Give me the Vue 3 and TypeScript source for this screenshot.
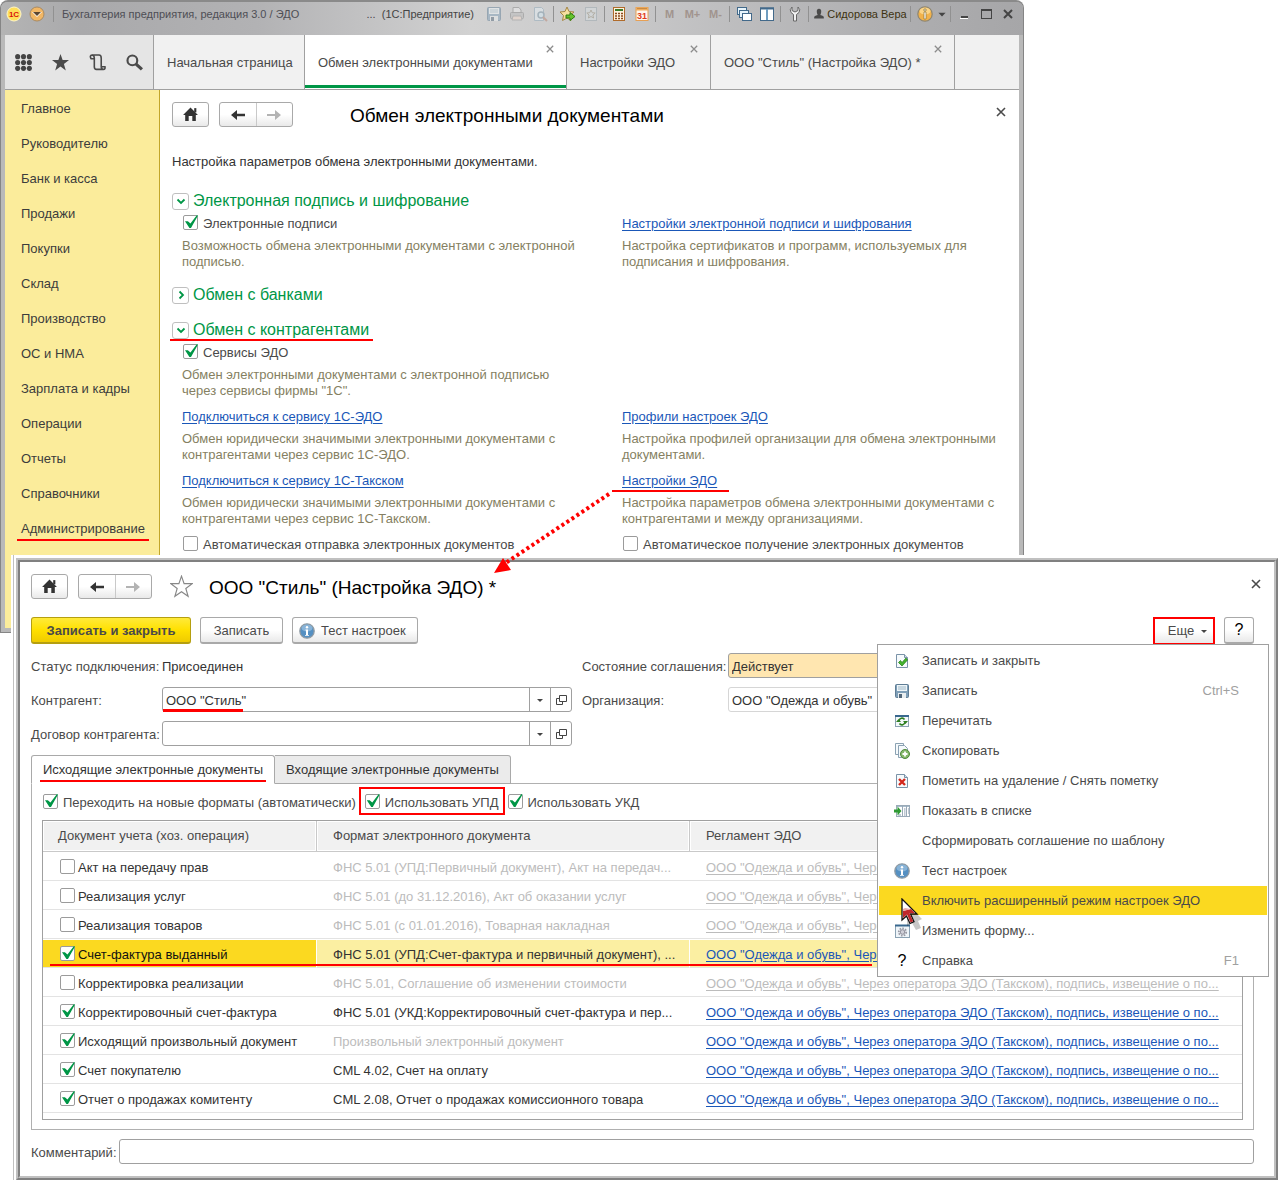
<script setup lang="ts">
import { ref } from 'vue'

interface ToolItem { kind: 'icon' | 'sep' | 'text'; name?: string; label?: string }
interface MenuItem { text: string; icon?: string; key?: string; active?: boolean }
interface DocRow { on: boolean; name: string; format: string; dimFormat: boolean; dimLink: boolean; current?: boolean }

const page = '<path d="M2.500 1.500h8l3 3v10h-11z" fill="#f6fafc" stroke="#7a93a8"/><path d="M10.500 1.500v3h3" fill="#cfdde8" stroke="#7a93a8"/>'

const icons: Record<string, string> = {
  save: '<rect x="1.500" y="1.500" width="13" height="13" rx="1" fill="#7f9fb8" stroke="#5f7d95"/><rect x="3" y="2" width="10" height="6" fill="#eef5f8"/><path d="M4 4h8M4 6h8" stroke="#9fb8c8"/><rect x="4" y="10" width="8" height="5" fill="#e9eef0"/><rect x="5" y="11" width="3" height="4" fill="#52677a"/>',
  print: '<path d="M4 6V1.500h6L12 4v2" fill="#eee" stroke="#888"/><rect x="1.500" y="6.500" width="13" height="6" rx="1" fill="#bbb" stroke="#888"/><path d="M4 10h8l1 4H3z" fill="#f2d9cc" stroke="#999"/>',
  preview: '<path d="M2.500 1.500h7l2 2v11h-9z" fill="#e5eff5" stroke="#8fa9ba"/><circle cx="9" cy="9" r="3" fill="#d5ecf7" stroke="#7c97a8" stroke-width="1.500"/><path d="M11 11l4 4" stroke="#b98572" stroke-width="2"/>',
  favadd: '<path d="M7 1l2 4.500 5 .5-4 3.500 1 5L7 12l-4.500 2.500 1-5L0 6l5-.5z" fill="#f7dfa0" stroke="#a58645"/><path d="M6 9h4V6.500l5 4-5 4V12H6z" fill="#66c32c" stroke="#2f7d10"/>',
  favdoc: '<rect x="2.500" y="1.500" width="11" height="13" fill="#d8dfe2" stroke="#9aa7ae"/><path d="M8 4l1.200 2.700 3 .3-2.300 2 .7 3L8 10.500 5.400 12l.7-3-2.300-2 3-.3z" fill="none" stroke="#9c9480"/>',
  calc: '<rect x="2.500" y="1.500" width="11" height="13" fill="#fff3df" stroke="#b06c2c"/><path d="M4 4h8" stroke="#3c7a2a" stroke-width="2"/><path d="M4 7.500h8M4 10h8M4 12.500h8" stroke="#8b4a1c" stroke-width="1.500" stroke-dasharray="2 1"/>',
  date: '<rect x="2" y="1.500" width="12" height="13" fill="#fff7ee" stroke="#e6a055"/><path d="M2 3h12" stroke="#efac5e" stroke-width="3"/><path d="M3.500 2.500h9" stroke="#a06a2c" stroke-dasharray="1 1"/><text x="8" y="13" font-family="Liberation Sans" font-size="9" font-weight="700" text-anchor="middle" fill="#e03a1c">31</text>',
  windows: '<rect x="1.500" y="1.500" width="9" height="7" fill="#e8f4fb" stroke="#42698a"/><rect x="3.500" y="4.500" width="9" height="7" fill="#e8f4fb" stroke="#42698a"/><rect x="6.500" y="7.500" width="9" height="7" fill="#fff" stroke="#42698a"/>',
  split: '<rect x="1.500" y="2" width="13" height="12.500" fill="#fff" stroke="#42698a"/><path d="M1 2.500h14" stroke="#42698a" stroke-width="2"/><path d="M8 3v11" stroke="#6f9dc0" stroke-width="2"/>',
  wrench: '<path d="M5 1v3.500L8 6l3-1.500V1q3 2.500 1 5.500L9.500 8.500V15h-3V8.500L4 6.500Q2 3.500 5 1z" fill="#f0f0f0" stroke="#666"/>',
  info: '<circle cx="8" cy="8" r="7.200" fill="#5590c2" stroke="#8f9aa3" stroke-width="1.300"/><ellipse cx="8" cy="5" rx="5.500" ry="3.600" fill="#a9cce6" opacity=".6"/><circle cx="8" cy="4.300" r="1.200" fill="#fff"/><path d="M6.500 6.500H9V12H10V12.800H6V12H7V7.500H6.500z" fill="#fff"/>',
  infowarm: '<circle cx="8" cy="8" r="7.200" fill="#f2b24a" stroke="#8e8570" stroke-width="1.200"/><ellipse cx="8" cy="5" rx="5.500" ry="3.600" fill="#ffe2a0" opacity=".7"/><path d="M7 3h2v2H7zM7 6h2v7H7z" fill="#fff" stroke="#8a7238" stroke-width=".7"/>',
  pagecheck: page + '<path d="M4.500 9.500l2-2L8 9.500 12 5l1.500 2L8 13z" fill="#45b52d" stroke="#1e7a14" stroke-width=".7"/>',
  reread: '<rect x="1.500" y="2.500" width="13" height="11" fill="#f4f9fb" stroke="#8ba2b3"/><path d="M1 3h14" stroke="#39688f" stroke-width="2"/><path d="M5 8a3 3 0 0 1 5.500-1.500M11 9a3 3 0 0 1-5.500 1.500" fill="none" stroke="#2f7f22" stroke-width="1.600"/><path d="M9 8h5l-2.500 3zM7 9H2l2.500-3z" fill="#2f7f22"/>',
  copy: '<path d="M1.500.5h8v11h-8z" fill="#f6fafc" stroke="#8ba2b3"/><path d="M4.500 2.500h6l3 3v9h-9z" fill="#f6fafc" stroke="#8ba2b3"/><circle cx="11" cy="11" r="4.500" fill="#85b86b" stroke="#4f8a3a"/><path d="M11 8.500v5M8.500 11h5" stroke="#fff" stroke-width="1.800"/>',
  pagedel: page + '<path d="M5 6l6 6M11 6l-6 6" stroke="#d3271b" stroke-width="2.400"/>',
  list: '<rect x="2.500" y="2.500" width="13" height="11" fill="#fff" stroke="#9aaab8"/><path d="M3 3.500h12" stroke="#a8bccb"/><path d="M8.500 3v11M12.500 3v11" stroke="#9aaab8"/><path d="M10 6h1.500M10 8h1.500M10 10h1.500M10 12h1.500M14 6h1M14 8h1M14 10h1M4 12h3" stroke="#8195a8"/><path d="M0 6.500h3.500V3.500l4 4.500-4 4.500v-3H0z" fill="#2f9a33"/>',
  form: '<rect x="1.500" y="2.500" width="14" height="12" fill="#eff5f9" stroke="#8ba2b3"/><path d="M1 2.500h15" stroke="#39688f" stroke-width="2"/><circle cx="8.500" cy="9" r="3.700" fill="none" stroke="#9a9aa4" stroke-width="1.800" stroke-dasharray="1.600 1.200"/><circle cx="8.500" cy="9" r="2.300" fill="#d0d0d8" stroke="#8c8c98"/>',
  min: '<path d="M4 12.500h8" stroke="#fff" stroke-width="1"/><path d="M5 11h7" stroke="#444" stroke-width="2"/>',
  max: '<rect x="3.500" y="3.500" width="10" height="9" fill="none" stroke="#444"/><path d="M3 4h11" stroke="#444" stroke-width="2"/>',
  close: '<path d="M4 4l8 8M12 4l-8 8" stroke="#444" stroke-width="2"/>',
  home: '<path d="M8 1.500l7 7h-2V14H9.700V9.500H6.300V14H3V8.500H1z" fill="#333"/><path d="M11.500 2h2v4h-2z" fill="#333"/>',
  back: '<path d="M1 8l6-5v3.700h8v2.600H7V13z" fill="#333"/>',
  fwd: '<path d="M15 8L9 3v4H1v2h8v4z" fill="#b3b3b3"/>',
  cross: '<path d="M4 4l8 8M12 4l-8 8" stroke="currentColor" stroke-width="1.600"/>',
  caret: '<path d="M5 7h6l-3 3z" fill="#444"/>',
  open: '<path d="M6.500 3.500h7v6h-7z" fill="none" stroke="#444"/><path d="M6 6.500H3.500v6h6V10" fill="none" stroke="#444"/>',
  down: '<path d="M4.500 6.500L8 10l3.500-3.500" fill="none" stroke="#009646" stroke-width="1.800"/>',
  right: '<path d="M6.500 4.500L10 8l-3.500 3.500" fill="none" stroke="#009646" stroke-width="1.800"/>',
  user: '<path d="M8 2q3 0 2.500 4Q10 8.500 9.500 9q3 .5 4 2v2h-11v-2q1-1.500 4-2Q6 8.500 5.500 6 5 2 8 2z" fill="#4b4b4b"/>',
  star: '<path d="M8 0l2 5.700h6L11.200 9.300 13 15.500 8 11.800 3 15.500l1.800-6.200L0 5.700h6z" fill="#4a4a4a"/>',
  grid: '<g fill="#444"><circle cx="2.500" cy="2.500" r="2.400"/><circle cx="8" cy="2.500" r="2.400"/><circle cx="13.500" cy="2.500" r="2.400"/><circle cx="2.500" cy="8" r="2.400"/><circle cx="8" cy="8" r="2.400"/><circle cx="13.500" cy="8" r="2.400"/><circle cx="2.500" cy="13.500" r="2.400"/><circle cx="8" cy="13.500" r="2.400"/><circle cx="13.500" cy="13.500" r="2.400"/></g>',
  history: '<path d="M2 4.500Q0 1 3.500 1H9.500Q11.500 1 11.500 4v8q0 2 2 2.500 2 0 1.500-2.500h-3M3 1q2 .5 2 3v8q0 2.500 2 2.500h6.500M1.500 4.500H5" fill="none" stroke="#4a4a4a" stroke-width="1.500"/>',
  search: '<circle cx="6" cy="6" r="4.600" fill="none" stroke="#4a4a4a" stroke-width="2"/><path d="M9.500 9.500l5.500 5" stroke="#4a4a4a" stroke-width="3"/>',
  outline: '<path d="M8 .8l1.800 5.200h5.600L11 9.400l1.600 5.400L8 11.600l-4.600 3.200L5 9.400.6 6h5.600z" fill="#fff" stroke="#888" stroke-width=".8"/>',
}

const tools: ToolItem[] = [
  { kind: 'icon', name: 'save', label: 'Сохранить' },
  { kind: 'icon', name: 'print', label: 'Печать' },
  { kind: 'icon', name: 'preview', label: 'Просмотр' },
  { kind: 'sep' },
  { kind: 'icon', name: 'favadd', label: 'Добавить в избранное' },
  { kind: 'icon', name: 'favdoc', label: 'Избранное' },
  { kind: 'sep' },
  { kind: 'icon', name: 'calc', label: 'Калькулятор' },
  { kind: 'icon', name: 'date', label: 'Календарь' },
  { kind: 'sep' },
  { kind: 'text', label: 'M' },
  { kind: 'text', label: 'M+' },
  { kind: 'text', label: 'M-' },
  { kind: 'sep' },
  { kind: 'icon', name: 'windows', label: 'Окна' },
  { kind: 'icon', name: 'split', label: 'Панели' },
  { kind: 'sep' },
  { kind: 'icon', name: 'wrench', label: 'Сервис' },
  { kind: 'sep' },
]
const faded = ['save', 'print', 'preview', 'favdoc']

const sections = ['Главное', 'Руководителю', 'Банк и касса', 'Продажи', 'Покупки', 'Склад', 'Производство', 'ОС и НМА', 'Зарплата и кадры', 'Операции', 'Отчеты', 'Справочники', 'Администрирование']

const link = 'ООО "Одежда и обувь", Через оператора ЭДО (Такском), подпись, извещение о по...'
const rows = ref<DocRow[]>([
  { on: false, name: 'Акт на передачу прав', format: 'ФНС 5.01 (УПД:Первичный документ), Акт на передач...', dimFormat: true, dimLink: true },
  { on: false, name: 'Реализация услуг', format: 'ФНС 5.01 (до 31.12.2016), Акт об оказании услуг', dimFormat: true, dimLink: true },
  { on: false, name: 'Реализация товаров', format: 'ФНС 5.01 (с 01.01.2016), Товарная накладная', dimFormat: true, dimLink: true },
  { on: true, name: 'Счет-фактура выданный', format: 'ФНС 5.01 (УПД:Счет-фактура и первичный документ), ...', dimFormat: false, dimLink: false, current: true },
  { on: false, name: 'Корректировка реализации', format: 'ФНС 5.01, Соглашение об изменении стоимости', dimFormat: true, dimLink: true },
  { on: true, name: 'Корректировочный счет-фактура', format: 'ФНС 5.01 (УКД:Корректировочный счет-фактура и пер...', dimFormat: false, dimLink: false },
  { on: true, name: 'Исходящий произвольный документ', format: 'Произвольный электронный документ', dimFormat: true, dimLink: false },
  { on: true, name: 'Счет покупателю', format: 'CML 4.02, Счет на оплату', dimFormat: false, dimLink: false },
  { on: true, name: 'Отчет о продажах комитенту', format: 'CML 2.08, Отчет о продажах комиссионного товара', dimFormat: false, dimLink: false },
])

const menu: MenuItem[] = [
  { text: 'Записать и закрыть', icon: 'pagecheck' },
  { text: 'Записать', icon: 'save', key: 'Ctrl+S' },
  { text: 'Перечитать', icon: 'reread' },
  { text: 'Скопировать', icon: 'copy' },
  { text: 'Пометить на удаление / Снять пометку', icon: 'pagedel' },
  { text: 'Показать в списке', icon: 'list' },
  { text: 'Сформировать соглашение по шаблону' },
  { text: 'Тест настроек', icon: 'info' },
  { text: 'Включить расширенный режим настроек ЭДО', active: true },
  { text: 'Изменить форму...', icon: 'form' },
  { text: 'Справка', icon: 'help', key: 'F1' },
]

const signatures = ref(true)
const services = ref(true)
const autoSend = ref(false)
const autoReceive = ref(false)
const newFormats = ref(true)
const useUpd = ref(true)
const useUkd = ref(true)
const partner = ref('ООО "Стиль"')
const contract = ref('')
const agreement = ref('Действует')
const company = ref('ООО "Одежда и обувь"')
const comment = ref('')
</script>

<template>
  <div class="desktop">
    <section class="app">
      <header class="titlebar">
        <svg class="logo" width="46" height="18" viewBox="0 0 46 18">
          <circle cx="9" cy="9" r="7" fill="#ffdf5a" stroke="#fff6c8" />
          <text x="9" y="12" font-family="Liberation Sans" font-size="8" font-weight="700" text-anchor="middle" fill="#d8130a">1С</text>
          <circle cx="32" cy="9" r="7" fill="#f2b765" stroke="#a98a62" />
          <path d="M27 7h10l-5 5z" fill="#fff" /><path d="M28 7h8l-4 4z" fill="#5c4630" />
        </svg>
        <i class="sep"></i>
        <span class="caption">Бухгалтерия предприятия, редакция 3.0 / ЭДО</span>
        <span class="product">... &nbsp;(1С:Предприятие)</span>
        <template v-for="(t, i) in tools" :key="i">
          <i v-if="t.kind === 'sep'" class="sep"></i>
          <button v-else-if="t.kind === 'text'" class="tool memory">{{ t.label }}</button>
          <button v-else class="tool" :class="{ faded: faded.includes(t.name!) }" :aria-label="t.label">
            <svg width="16" height="16" viewBox="0 0 16 16" v-html="icons[t.name!]"></svg>
          </button>
        </template>
        <button class="user"><svg width="14" height="14" viewBox="0 0 16 16" v-html="icons.user"></svg>Сидорова Вера</button>
        <i class="sep"></i>
        <button class="tool" aria-label="О программе"><svg width="16" height="16" viewBox="0 0 16 16" v-html="icons.infowarm"></svg></button>
        <button class="tool slim" aria-label="Ещё"><svg width="12" height="12" viewBox="3 3 10 10" v-html="icons.caret"></svg></button>
        <i class="sep"></i>
        <button v-for="n in ['min', 'max', 'close']" :key="n" class="tool win" :aria-label="n"><svg width="16" height="16" viewBox="0 0 16 16" v-html="icons[n]"></svg></button>
      </header>

      <nav class="tabs">
        <div class="system">
          <button v-for="n in ['grid', 'star', 'history', 'search']" :key="n" :aria-label="n"><svg width="17" height="17" viewBox="0 0 16 16" v-html="icons[n]"></svg></button>
        </div>
        <a href="#" class="tab start">Начальная страница</a>
        <a href="#" class="tab current">Обмен электронными документами<svg class="x" width="8" height="8" viewBox="3 3 10 10" v-html="icons.cross"></svg></a>
        <a href="#" class="tab settings">Настройки ЭДО<svg class="x" width="8" height="8" viewBox="3 3 10 10" v-html="icons.cross"></svg></a>
        <a href="#" class="tab style">ООО "Стиль" (Настройка ЭДО) *<svg class="x" width="8" height="8" viewBox="3 3 10 10" v-html="icons.cross"></svg></a>
        <div class="rest"></div>
      </nav>

      <div class="body">
        <nav class="sections">
          <a v-for="s in sections" :key="s" href="#"><span :class="{ mark: s === 'Администрирование' }">{{ s }}</span></a>
        </nav>
        <main class="content">
          <div class="head">
            <button class="btn home" aria-label="Домой"><svg width="17" height="17" viewBox="0 0 16 16" v-html="icons.home"></svg></button>
            <div class="history">
              <button aria-label="Назад"><svg width="16" height="16" viewBox="0 0 16 16" v-html="icons.back"></svg></button>
              <button aria-label="Вперед"><svg width="16" height="16" viewBox="0 0 16 16" v-html="icons.fwd"></svg></button>
            </div>
            <h1>Обмен электронными документами</h1>
            <button class="closer" aria-label="Закрыть"><svg width="10" height="10" viewBox="3 3 10 10" v-html="icons.cross"></svg></button>
          </div>
          <p class="intro">Настройка параметров обмена электронными документами.</p>

          <h2><button aria-label="Свернуть"><svg width="14" height="14" viewBox="1 1 14 14" v-html="icons.down"></svg></button>Электронная подпись и шифрование</h2>
          <div class="pair">
            <div>
              <label class="line check"><input v-model="signatures" type="checkbox" />Электронные подписи</label>
              <p>Возможность обмена электронными документами с электронной<br />подписью.</p>
            </div>
            <div>
              <div class="line"><a href="#">Настройки электронной подписи и шифрования</a></div>
              <p>Настройка сертификатов и программ, используемых для<br />подписания и шифрования.</p>
            </div>
          </div>

          <h2 class="banks"><button aria-label="Развернуть"><svg width="14" height="14" viewBox="1 1 14 14" v-html="icons.right"></svg></button>Обмен с банками</h2>
          <h2 class="partners"><button aria-label="Свернуть"><svg width="14" height="14" viewBox="1 1 14 14" v-html="icons.down"></svg></button>Обмен с контрагентами</h2>
          <div class="pair">
            <div>
              <label class="line check"><input v-model="services" type="checkbox" />Сервисы ЭДО</label>
              <p>Обмен электронными документами с электронной подписью<br />через сервисы фирмы "1С".</p>
            </div>
          </div>
          <div class="pair">
            <div>
              <div class="line"><a href="#">Подключиться к сервису 1С-ЭДО</a></div>
              <p>Обмен юридически значимыми электронными документами с<br />контрагентами через сервис 1С-ЭДО.</p>
            </div>
            <div>
              <div class="line"><a href="#">Профили настроек ЭДО</a></div>
              <p>Настройка профилей организации для обмена электронными<br />документами.</p>
            </div>
          </div>
          <div class="pair">
            <div>
              <div class="line"><a href="#">Подключиться к сервису 1С-Такском</a></div>
              <p>Обмен юридически значимыми электронными документами с<br />контрагентами через сервис 1С-Такском.</p>
            </div>
            <div>
              <div class="line"><span class="mark wide"><a href="#">Настройки ЭДО</a></span></div>
              <p>Настройка параметров обмена электронными документами с<br />контрагентами и между организациями.</p>
            </div>
          </div>
          <div class="pair">
            <label class="line check"><input v-model="autoSend" type="checkbox" />Автоматическая отправка электронных документов</label>
            <label class="line check"><input v-model="autoReceive" type="checkbox" />Автоматическое получение электронных документов</label>
          </div>
        </main>
      </div>
    </section>

    <section class="sheet">
      <div class="ridge">
        <div class="form">
          <div class="head">
            <button class="btn home" aria-label="Домой"><svg width="17" height="17" viewBox="0 0 16 16" v-html="icons.home"></svg></button>
            <div class="history">
              <button aria-label="Назад"><svg width="16" height="16" viewBox="0 0 16 16" v-html="icons.back"></svg></button>
              <button aria-label="Вперед"><svg width="16" height="16" viewBox="0 0 16 16" v-html="icons.fwd"></svg></button>
            </div>
            <svg class="fav" width="23" height="23" viewBox="0 0 16 16" v-html="icons.outline"></svg>
            <h1>ООО "Стиль" (Настройка ЭДО) *</h1>
            <button class="closer" aria-label="Закрыть"><svg width="10" height="10" viewBox="3 3 10 10" v-html="icons.cross"></svg></button>
          </div>

          <div class="commands">
            <button class="btn primary">Записать и закрыть</button>
            <button class="btn write">Записать</button>
            <button class="btn test"><svg width="16" height="16" viewBox="0 0 16 16" v-html="icons.info"></svg>Тест настроек</button>
            <div class="more">
              <button class="btn">Еще<svg width="12" height="12" viewBox="2 2 12 12" v-html="icons.caret"></svg></button>
              <div class="menu" role="menu">
                <button v-for="m in menu" :key="m.text" role="menuitem" :class="{ active: m.active }">
                  <span class="ico">
                    <span v-if="m.icon === 'help'" class="question">?</span>
                    <svg v-else-if="m.icon" width="16" height="16" viewBox="0 0 16 16" v-html="icons[m.icon]"></svg>
                  </span>
                  <span class="name">{{ m.text }}</span>
                  <span v-if="m.key" class="key">{{ m.key }}</span>
                  <svg v-if="m.active" class="pointer" width="24" height="34" viewBox="0 0 24 34">
                    <path d="M6 6l15 15-4 2 3 7-5 2-4-7-5 3z" fill="#000" opacity=".22" />
                    <path d="M1 1v21l4.500-4 3.500 7.500 4-1.800-3.500-7.700H16z" fill="#fff" stroke="#111" stroke-width="1.300" />
                    <path d="M2 13l8-2 4 4.300H8.500l3.700 8-2.700 1.200L6 16.500l-4 3.500z" fill="#c0282c" />
                    <path d="M2 13l8-2-6-1-2 1z" fill="#e8a8a8" />
                  </svg>
                </button>
              </div>
            </div>
            <button class="btn help">?</button>
          </div>

          <div class="fields">
            <span class="lab">Статус подключения:</span>
            <span class="value">Присоединен</span>
            <label class="lab" for="agreement">Состояние соглашения:</label>
            <input id="agreement" v-model="agreement" class="box amber" readonly />
            <label class="lab" for="partner">Контрагент:</label>
            <div class="combo">
              <span class="mark"></span>
              <input id="partner" v-model="partner" />
              <button aria-label="Выбрать"><svg width="16" height="16" viewBox="0 0 16 16" v-html="icons.caret"></svg></button>
              <button aria-label="Открыть"><svg width="15" height="15" viewBox="1 0 15 15" v-html="icons.open"></svg></button>
            </div>
            <label class="lab" for="company">Организация:</label>
            <input id="company" v-model="company" class="box pale" readonly />
            <label class="lab" for="contract">Договор контрагента:</label>
            <div class="combo">
              <input id="contract" v-model="contract" />
              <button aria-label="Выбрать"><svg width="16" height="16" viewBox="0 0 16 16" v-html="icons.caret"></svg></button>
              <button aria-label="Открыть"><svg width="15" height="15" viewBox="1 0 15 15" v-html="icons.open"></svg></button>
            </div>
          </div>

          <div class="pages">
            <button class="on"><span class="mark">Исходящие электронные документы</span></button>
            <button>Входящие электронные документы</button>
          </div>
          <div class="panel">
            <div class="options">
              <label class="check"><input v-model="newFormats" type="checkbox" />Переходить на новые форматы (автоматически)</label>
              <label class="check framed"><input v-model="useUpd" type="checkbox" />Использовать УПД</label>
              <label class="check"><input v-model="useUkd" type="checkbox" />Использовать УКД</label>
            </div>
            <div class="grid">
              <table>
                <colgroup><col class="c1" /><col class="c2" /><col /></colgroup>
                <thead>
                  <tr><th>Документ учета (хоз. операция)</th><th>Формат электронного документа</th><th>Регламент ЭДО</th></tr>
                </thead>
                <tbody>
                  <tr v-for="r in rows" :key="r.name" :class="{ picked: r.current }">
                    <td><label class="check"><input v-model="r.on" type="checkbox" />{{ r.name }}</label><span v-if="r.current" class="strike"></span></td>
                    <td :class="{ dim: r.dimFormat }">{{ r.format }}</td>
                    <td><a href="#" :class="{ dim: r.dimLink }">{{ link }}</a></td>
                  </tr>
                </tbody>
              </table>
            </div>
          </div>

          <div class="comment">
            <label for="comment">Комментарий:</label>
            <input id="comment" v-model="comment" class="box" />
          </div>
        </div>
      </div>
    </section>

    <svg class="arrow" width="124" height="90" viewBox="0 0 124 90">
      <path d="M119 5L14 75" stroke="#f00" stroke-width="4" stroke-dasharray="3 3" />
      <path d="M4 84l9-15 8 12z" fill="#f00" />
    </svg>
  </div>
</template>

<style>
body {
  margin: 0;
  background: #fff;
}
</style>

<style scoped>
* {
  box-sizing: border-box;
}
.desktop {
  position: relative;
  display: grid;
  font: 13px/16px "Liberation Sans", Arial, sans-serif;
  color: #4a4a4a;
  white-space: nowrap;
}
button, input {
  font: inherit;
  color: inherit;
}
button {
  margin: 0;
  padding: 0;
  border: 0;
  background: none;
  display: flex;
  align-items: center;
  justify-content: center;
}
svg {
  flex: none;
}
h1, h2, p {
  margin: 0;
  font-weight: 400;
}
.app, .sheet {
  grid-area: 1 / 1;
  min-width: 0;
}
.app {
  align-self: start;
  margin-right: 254px;
  padding: 0 4px 4px;
  border: 1px solid #858585;
  border-top: 2px solid #8a8a8a;
  border-radius: 8px 8px 0 0;
  background: #b9b9b9;
}
.titlebar {
  display: flex;
  align-items: center;
  height: 33px;
  padding: 0 4px 10px 0;
  margin: 0 -4px;
  border-radius: 6px 6px 0 0;
  background: linear-gradient(90deg, #b4b4b4, #a9a9ab 8%, #b2b2b4 25%, #d2d2d2 46%, #c9c9ca 60%, #b0b0b2 85%, #a6a6a8);
  color: #444;
  font-size: 11px;
}
.logo {
  margin-left: 4px;
}
.caption {
  flex: 1;
  min-width: 0;
  margin-left: 6px;
  color: #4e4e55;
}
.product {
  margin-right: 8px;
}
.sep {
  flex: none;
  width: 5px;
  height: 16px;
  background: linear-gradient(#919191, #919191) 2px 0 / 1px 100% no-repeat;
}
.tool {
  flex: none;
  width: 23px;
  height: 22px;
}
.tool.slim {
  width: 12px;
}
.tool.win {
  width: 22px;
}
.tool.faded {
  opacity: 0.5;
}
.memory {
  color: #a1948e;
  font-weight: 700;
}
.user {
  width: 97px;
  gap: 1px;
  color: #3d3210;
}
.tabs {
  display: flex;
  height: 55px;
  background: #f1f1f1;
  border-bottom: 1px solid #a0a0a0;
}
.system {
  display: flex;
  flex: none;
  width: 148px;
  background: #e5e5e5;
}
.system button {
  width: 37px;
}
.tab {
  position: relative;
  flex: none;
  padding-left: 13px;
  border-left: 1px solid #a0a0a0;
  line-height: 56px;
  color: #4a4a4a;
  text-decoration: none;
}
.tab.start {
  width: 151px;
}
.tab.current {
  width: 262px;
  background: #fff;
  box-shadow: inset 0 -1px #fff, inset 0 -4px #009646;
}
.tab.settings {
  width: 144px;
}
.tab.style {
  width: 244px;
}
.rest {
  flex: 1;
  border-left: 1px solid #a0a0a0;
}
.tab .x {
  position: absolute;
  top: 10px;
  right: 12px;
  color: #8c8c8c;
}
.body {
  display: flex;
  background: #fff;
}
.sections {
  flex: none;
  width: 155px;
  padding: 1px 0 82px;
  border-right: 1px solid #c2a62a;
  background: #fbec9b;
}
.sections a {
  display: block;
  padding-left: 16px;
  line-height: 35px;
  color: #3c3c3c;
  text-decoration: none;
}
.mark {
  position: relative;
}
.mark::after {
  content: "";
  position: absolute;
  left: -4px;
  right: -4px;
  bottom: -5px;
  height: 2px;
  background: #f00;
}
.mark.wide::after {
  left: -10px;
  right: -12px;
  bottom: -4px;
}
.content {
  flex: 1;
  min-width: 0;
  padding: 12px 10px 0 12px;
  overflow: hidden;
}
.head {
  display: flex;
  align-items: center;
  height: 25px;
}
.head h1 {
  flex: 1;
  padding-top: 2px;
  color: #000;
  font-size: 19px;
  line-height: 25px;
}
.content .head h1 {
  margin-left: 57px;
}
.btn, .history {
  border: 1px solid #a9a9a9;
  border-radius: 3px;
  background: linear-gradient(#fff, #fff 50%, #e9e9e9);
}
.home {
  width: 37px;
  height: 25px;
}
.history {
  display: flex;
  width: 74px;
  height: 25px;
  margin-left: 10px;
}
.history button {
  flex: 1;
}
.history button + button {
  border-left: 1px solid #c9c9c9;
}
.closer {
  width: 16px;
  height: 20px;
  align-self: flex-start;
}
.form .closer {
  margin-right: -10px;
}
.intro {
  margin: 27px 0 20px;
  color: #333;
}
h2 {
  position: relative;
  display: flex;
  align-items: center;
  width: max-content;
  height: 22px;
  gap: 4px;
  color: #009646;
  font-size: 16px;
}
h2 button {
  width: 17px;
  height: 17px;
  border: 1px solid #bfbfbf;
  border-radius: 3px;
}
h2.banks {
  margin: 8px 0 13px;
}
h2.partners::after {
  content: "";
  position: absolute;
  left: -2px;
  right: -4px;
  bottom: 0;
  height: 2px;
  background: #f00;
}
.pair {
  display: grid;
  grid-template-columns: 440px 1fr;
  margin-left: 10px;
}
.pair p {
  padding: 4px 0 6px;
  color: #857f62;
}
.line {
  height: 22px;
  line-height: 24px;
}
a {
  color: #1a57b8;
  text-underline-offset: 2px;
}
.check {
  display: flex;
  align-items: flex-start;
  gap: 5px;
  line-height: 18px;
}
.line.check {
  padding: 3px 0 0 1px;
}
input[type="checkbox"] {
  appearance: none;
  position: relative;
  flex: none;
  width: 15px;
  height: 15px;
  margin: 0;
  border: 1px solid #9b9b9b;
  border-radius: 2px;
  background: #fff;
}
input[type="checkbox"]:checked::after {
  content: "";
  position: absolute;
  left: 1px;
  top: -1px;
  width: 13px;
  height: 13px;
  background: #009646;
  clip-path: polygon(0 48%, 22% 48%, 42% 66%, 92% 0, 100% 4%, 46% 100%, 34% 100%);
}

.sheet {
  margin: 555px 0 0 11px;
  padding: 3px 0 0 2px;
  background: linear-gradient(#c0c0c0, #c0c0c0) 2px 0 / 1px 100% no-repeat #fff;
  z-index: 1;
}
.ridge {
  margin-left: 3px;
  border: 2px solid;
  border-color: #c0c0c0 #808080 #808080 #c0c0c0;
}
.form {
  padding: 12px 20px 12px 11px;
  border: 2px solid;
  border-color: #808080 #c0c0c0 #c0c0c0 #808080;
}
.fav {
  margin: 0 16px 0 18px;
}
.commands {
  display: flex;
  height: 27px;
  margin: 18px 0 9px;
}
.commands .btn {
  height: 27px;
  padding-top: 2px;
  border-bottom: 2px solid #a9a9a9;
}
.commands .primary {
  width: 160px;
  border-color: #b59f10;
  background: linear-gradient(#ffea3a, #ffe000 50%, #efcb00);
  font-weight: 700;
}
.commands .write {
  width: 83px;
  margin: 0 9px;
}
.commands .test {
  justify-content: flex-start;
  width: 126px;
  padding-left: 6px;
  gap: 6px;
}
.commands .more {
  position: relative;
  margin: 0 9px 0 auto;
}
.more > .btn {
  width: 62px;
  height: 28px;
  padding: 0 0 0 10px;
  gap: 4px;
  border: 2px solid #f00;
  border-radius: 0;
}
.commands .help {
  width: 30px;
  padding: 0;
  color: #000;
  font-size: 16px;
}
.menu {
  position: absolute;
  z-index: 3;
  top: 27px;
  right: -54px;
  width: 392px;
  padding: 1px 1px 0;
  border: 1px solid #a0a0a0;
  background: #fff;
}
.menu button {
  position: relative;
  justify-content: flex-start;
  width: 100%;
  height: 30px;
  padding: 0 28px 0 15px;
}
.menu .active {
  background: linear-gradient(#fbd920, #fbd920) 0 0 / 100% 29px no-repeat;
}
.ico {
  display: flex;
  justify-content: center;
  width: 16px;
  margin-right: 12px;
}
.question {
  color: #000;
  font-size: 16px;
}
.name {
  flex: 1;
  text-align: left;
}
.key {
  color: #a0a0a0;
}
.pointer {
  position: absolute;
  z-index: 1;
  left: 22px;
  top: 12px;
}
.fields {
  display: grid;
  grid-template-columns: 131px 410px 156px 1fr;
  grid-auto-rows: 25px;
  row-gap: 9px;
  align-items: center;
  color: #333;
}
.fields > :nth-child(4n + 3) {
  padding-left: 10px;
}
.lab, .value, .comment label {
  padding-top: 2px;
}
.lab, .comment label {
  color: #4a4a4a;
}
.combo, .box {
  height: 25px;
  border: 1px solid #a0a0a0;
  border-radius: 3px;
  background: #fff;
}
.box {
  width: 100%;
  min-width: 0;
  padding: 2px 3px 0;
}
.box.amber {
  background: #ffe6b0;
}
.box.pale {
  border-color: #d6d6d6;
}
.combo {
  position: relative;
  display: flex;
}
.combo input {
  flex: 1;
  min-width: 0;
  padding: 2px 3px 0;
  border: 0;
  background: none;
}
.combo button {
  width: 21px;
  border-left: 1px solid #a0a0a0;
}
.combo .mark {
  position: absolute;
  left: 0;
  bottom: 0;
  width: 80px;
}
.combo .mark::after {
  left: 0;
  right: 0;
  bottom: -1px;
  height: 3px;
}
.pages {
  position: relative;
  display: flex;
  height: 29px;
  margin-top: 9px;
  color: #333;
}
.pages button {
  width: 236px;
  border: 1px solid #a9a9a9;
  border-left: 0;
  border-radius: 0 3px 0 0;
  background: #ebebeb;
}
.pages .on {
  width: 244px;
  border-left: 1px solid #a9a9a9;
  border-bottom-color: #fff;
  border-radius: 3px 3px 0 0;
  background: #fff;
}
.pages .mark::after {
  left: -3px;
  right: -3px;
  bottom: -4px;
}
.panel {
  margin-top: -1px;
  padding: 10px 10px 9px;
  border: 1px solid #b0b0b0;
}
.options {
  display: flex;
  gap: 9px;
  height: 18px;
  margin: 0 0 8px 1px;
}
.framed {
  position: relative;
}
.framed::after {
  content: "";
  position: absolute;
  inset: -7px -6px -3px;
  border: 2px solid #f00;
  pointer-events: none;
}
.grid {
  height: 300px;
  border: 1px solid #a0a0a0;
}
table {
  width: 100%;
  table-layout: fixed;
  border-collapse: separate;
  border-spacing: 0;
  color: #333;
}
.c1 {
  width: 274px;
}
.c2 {
  width: 373px;
}
th {
  height: 31px;
  padding: 0 0 0 15px;
  border-right: 1px solid #c9c9c9;
  border-bottom: 1px solid #c9c9c9;
  background: #f1f1f1;
  box-shadow: inset 1px 1px #fff, inset -1px -1px #fff;
  color: #4a4a4a;
  font-weight: 400;
  text-align: left;
}
th:last-child {
  border-right: 0;
}
td {
  position: relative;
  height: 29px;
  padding: 7px 0 0 17px;
  border-bottom: 1px solid #e3e3e3;
  line-height: 18px;
  vertical-align: top;
}
th + th, td + td {
  padding-left: 16px;
}
td .check {
  gap: 3px;
}
.dim {
  color: #bcbcbc;
}
.picked td {
  border-right: 1px solid #fff;
  background: linear-gradient(#fbefa2, #fbefa2) 0 1px / 100% 27px no-repeat;
}
.picked td:first-child {
  background-image: linear-gradient(#fbd920, #fbd920);
  color: #111;
  z-index: 1;
}
.strike {
  position: absolute;
  left: 7px;
  bottom: 1px;
  width: 822px;
  height: 2px;
  background: #f00;
}
.comment {
  display: flex;
  align-items: center;
  gap: 2px;
  margin-top: 9px;
}
.comment .box {
  flex: 1;
}
.arrow {
  position: absolute;
  z-index: 2;
  left: 490px;
  top: 489px;
}
</style>
